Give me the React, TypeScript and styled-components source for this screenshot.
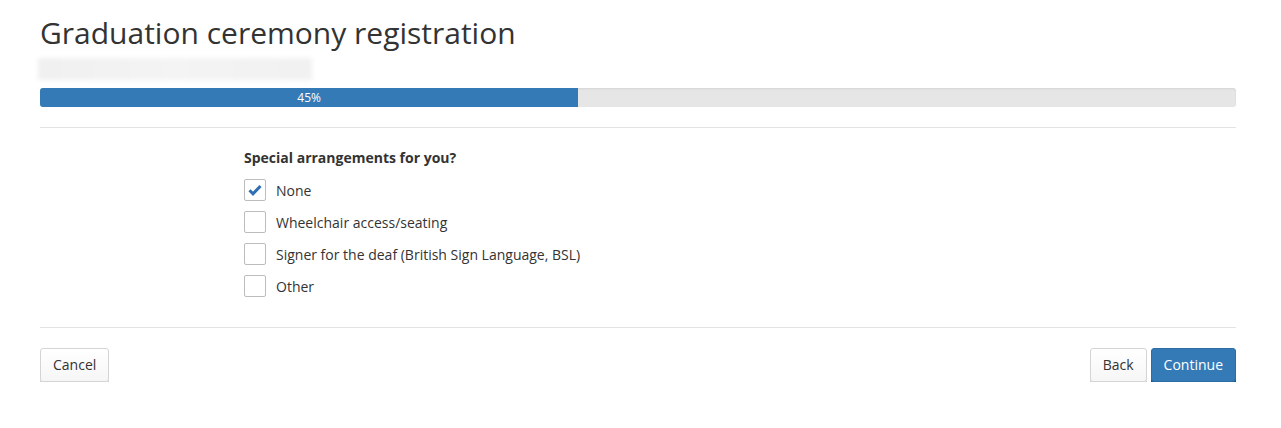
import styled, { createGlobalStyle } from 'styled-components';

const GlobalStyle = createGlobalStyle`
  body {
    margin: 0;
    background: #ffffff;
    font-family: "Open Sans", "Liberation Sans", sans-serif;
    color: #333333;
  }
`;

const Page = styled.div`
  width: 1196px;
  margin-left: 40px;
  padding-top: 14px;
`;

const Title = styled.h1`
  margin: 0;
  font-size: 30px;
  font-weight: 400;
  line-height: 38px;
  color: #333;
`;

const BlurredName = styled.div`
  margin: 6px 0 0 -2px;
  width: 274px;
  height: 22px;
  background: linear-gradient(90deg, #f0f0f0, #f4f4f4 50%, #f1f1f1);
  filter: blur(2px);
`;

const Progress = styled.div`
  margin-top: 8px;
  height: 19px;
  border-radius: 3px;
  background: #e6e6e6;
  box-shadow: inset 0 1px 2px rgba(0, 0, 0, 0.08);
  overflow: hidden;
`;

const ProgressFill = styled.div`
  height: 100%;
  background: #337ab7;
  color: #fff;
  font-size: 12px;
  line-height: 19px;
  text-align: center;
`;

const Divider = styled.hr<{ $top?: number }>`
  margin: ${(p) => p.$top ?? 0}px 0 0;
  border: 0;
  border-top: 1px solid #e3e3e3;
`;

const Fieldset = styled.fieldset`
  margin: 0;
  border: 0;
  padding: 20px 0 25px 204px;
`;

const Legend = styled.div`
  font-size: 14px;
  font-weight: 700;
  line-height: 20px;
  margin-bottom: 6px;
`;

const Option = styled.label`
  display: flex;
  align-items: center;
  gap: 10px;
  height: 32px;
  font-size: 14px;
  color: #333;
`;

const Box = styled.span`
  width: 20px;
  height: 20px;
  border: 1px solid #bdbdbd;
  border-radius: 2px;
  background: #fff;
  display: flex;
  align-items: center;
  justify-content: center;
`;

const Footer = styled.div`
  display: flex;
  justify-content: space-between;
  padding-top: 20px;
`;

const Group = styled.div`
  display: flex;
  gap: 4px;
`;

const Button = styled.button<{ $primary?: boolean }>`
  font-family: "Open Sans", "Liberation Sans", sans-serif;
  font-size: 14px;
  line-height: 20px;
  padding: 6px 12px;
  border-radius: 3px;
  border: 1px solid ${(p) => (p.$primary ? '#2e6da4' : '#d4d4d4')};
  background: ${(p) => (p.$primary ? '#337ab7' : 'linear-gradient(#ffffff, #f6f6f6)')};
  color: ${(p) => (p.$primary ? '#fff' : '#333')};
  box-shadow: 0 2px 0 ${(p) => (p.$primary ? '#1f4f7a' : '#c4c4c4')};
  cursor: pointer;
`;

const options = [
  { label: 'None', checked: true },
  { label: 'Wheelchair access/seating', checked: false },
  { label: 'Signer for the deaf (British Sign Language, BSL)', checked: false },
  { label: 'Other', checked: false },
];

function Check() {
  return (
    <svg width="14" height="12" viewBox="0 0 14 12">
      <path d="M1.5 6.2 L5 9.8 L12.5 2" fill="none" stroke="#2f6fb3" strokeWidth="3" />
    </svg>
  );
}

export default function App() {
  const percent = 45;
  return (
    <Page>
      <GlobalStyle />
      <Title>Graduation ceremony registration</Title>
      <BlurredName />
      <Progress>
        <ProgressFill style={{ width: `${percent}%` }}>{percent}%</ProgressFill>
      </Progress>
      <Divider $top={20} />
      <Fieldset>
        <Legend>Special arrangements for you?</Legend>
        {options.map((o) => (
          <Option key={o.label}>
            <Box>{o.checked && <Check />}</Box>
            {o.label}
          </Option>
        ))}
      </Fieldset>
      <Divider />
      <Footer>
        <Button>Cancel</Button>
        <Group>
          <Button>Back</Button>
          <Button $primary>Continue</Button>
        </Group>
      </Footer>
    </Page>
  );
}
